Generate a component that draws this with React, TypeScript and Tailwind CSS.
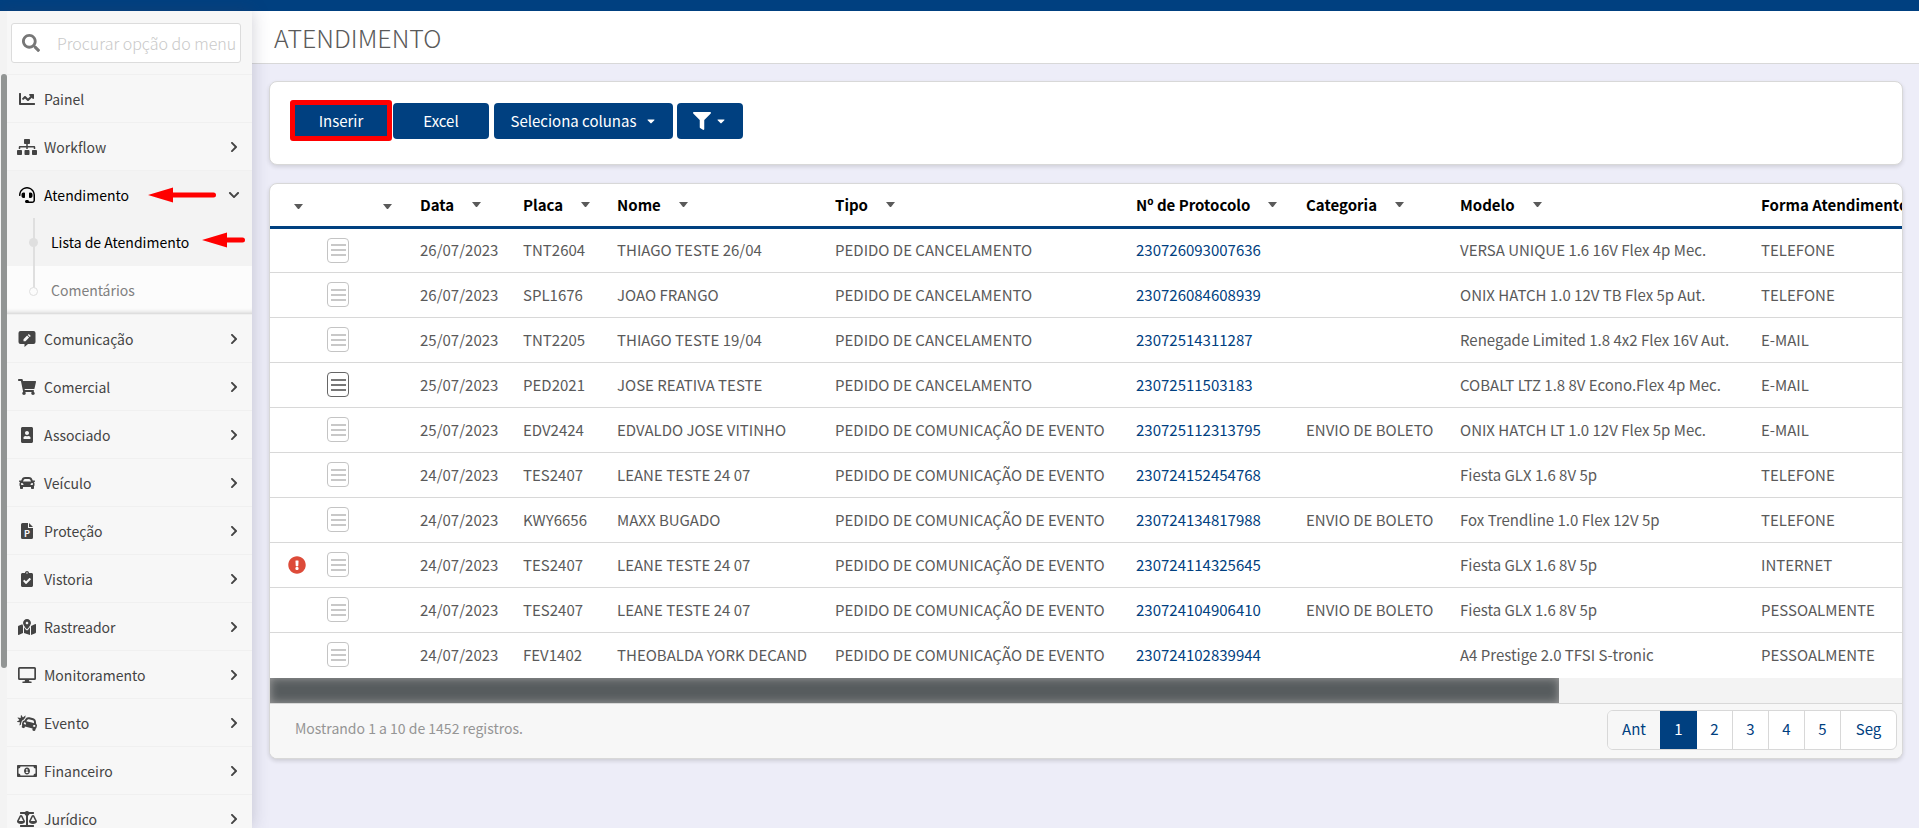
import { useState } from "react";
import type { ComponentType } from "react";
import {
  FaBalanceScale,
  FaCar,
  FaCarCrash,
  FaCaretDown,
  FaChartLine,
  FaChevronDown,
  FaChevronRight,
  FaClipboardCheck,
  FaExclamationCircle,
  FaFilter,
  FaHeadset,
  FaMapMarkedAlt,
  FaPortrait,
  FaRegMoneyBillAlt,
  FaSearch,
  FaShoppingCart,
  FaSitemap,
} from "react-icons/fa";

type IconType = ComponentType<{ className?: string }>;

// speech box with a pencil cut out of it
function CommentPenIcon({ className }: { className?: string }) {
  return (
    <svg viewBox="0 0 17 16" className={className} aria-hidden="true">
      <path
        fill="currentColor"
        fillRule="evenodd"
        d="M2 0h13a2 2 0 0 1 2 2v9a2 2 0 0 1-2 2H9.500L6 16v-3H2a2 2 0 0 1-2-2V2a2 2 0 0 1 2-2ZM5 8.200V10.200H7L10.600 6.600L8.600 4.600ZM9.300 3.900L11.300 5.900L12.300 4.900L10.300 2.900Z"
      />
    </svg>
  );
}

function FileBadgeIcon({ className }: { className?: string }) {
  return (
    <span className={`relative inline-flex items-center justify-center ${className ?? ""}`}>
      <svg viewBox="0 0 12 16" className="h-4 w-3" aria-hidden="true">
        <path
          fill="currentColor"
          d="M1.500 0H7v4.500a.5.500 0 0 0 .5.500H12v9.500a1.500 1.500 0 0 1-1.500 1.500h-9A1.500 1.500 0 0 1 0 14.500v-13A1.500 1.500 0 0 1 1.500 0ZM8 0L12 4H8Z"
        />
      </svg>
      <span className="absolute inset-x-0 bottom-0 text-center text-[9px] leading-[11px] font-bold text-[#f7f7f7]">
        P
      </span>
    </span>
  );
}

function MonitorIcon({ className }: { className?: string }) {
  return (
    <svg viewBox="0 0 18 16" className={className} aria-hidden="true">
      <path
        fill="currentColor"
        fillRule="evenodd"
        d="M1.500 0h15A1.500 1.500 0 0 1 18 1.500v10a1.500 1.500 0 0 1-1.500 1.500H11l.4 1.500h1.600a.7.700 0 0 1 0 1.500H5a.7.700 0 0 1 0-1.500h1.600L7 13H1.500A1.500 1.500 0 0 1 0 11.500v-10A1.500 1.500 0 0 1 1.500 0ZM1.700 1.700v9.600h14.600V1.700Z"
      />
    </svg>
  );
}

const MENU: { label: string; icon: IconType; leaf?: boolean }[] = [
  { label: "Painel", icon: FaChartLine, leaf: true },
  { label: "Workflow", icon: FaSitemap },
  { label: "Atendimento", icon: FaHeadset },
  { label: "Comunicação", icon: CommentPenIcon },
  { label: "Comercial", icon: FaShoppingCart },
  { label: "Associado", icon: FaPortrait },
  { label: "Veículo", icon: FaCar },
  { label: "Proteção", icon: FileBadgeIcon },
  { label: "Vistoria", icon: FaClipboardCheck },
  { label: "Rastreador", icon: FaMapMarkedAlt },
  { label: "Monitoramento", icon: MonitorIcon },
  { label: "Evento", icon: FaCarCrash },
  { label: "Financeiro", icon: FaRegMoneyBillAlt },
  { label: "Jurídico", icon: FaBalanceScale },
];

const CANCEL = "PEDIDO DE CANCELAMENTO";
const EVENTO = "PEDIDO DE COMUNICAÇÃO DE EVENTO";
const BOLETO = "ENVIO DE BOLETO";

type Row = {
  data: string;
  placa: string;
  nome: string;
  tipo: string;
  protocolo: string;
  categoria?: string;
  modelo: string;
  forma: string;
  alert?: boolean;
  active?: boolean;
};

const ROWS: Row[] = [
  { data: "26/07/2023", placa: "TNT2604", nome: "THIAGO TESTE 26/04", tipo: CANCEL, protocolo: "230726093007636", modelo: "VERSA UNIQUE 1.6 16V Flex 4p Mec.", forma: "TELEFONE" },
  { data: "26/07/2023", placa: "SPL1676", nome: "JOAO FRANGO", tipo: CANCEL, protocolo: "230726084608939", modelo: "ONIX HATCH 1.0 12V TB Flex 5p Aut.", forma: "TELEFONE" },
  { data: "25/07/2023", placa: "TNT2205", nome: "THIAGO TESTE 19/04", tipo: CANCEL, protocolo: "23072514311287", modelo: "Renegade Limited 1.8 4x2 Flex 16V Aut.", forma: "E-MAIL" },
  { data: "25/07/2023", placa: "PED2021", nome: "JOSE REATIVA TESTE", tipo: CANCEL, protocolo: "23072511503183", modelo: "COBALT LTZ 1.8 8V Econo.Flex 4p Mec.", forma: "E-MAIL", active: true },
  { data: "25/07/2023", placa: "EDV2424", nome: "EDVALDO JOSE VITINHO", tipo: EVENTO, protocolo: "230725112313795", categoria: BOLETO, modelo: "ONIX HATCH LT 1.0 12V Flex 5p Mec.", forma: "E-MAIL" },
  { data: "24/07/2023", placa: "TES2407", nome: "LEANE TESTE 24 07", tipo: EVENTO, protocolo: "230724152454768", modelo: "Fiesta GLX 1.6 8V 5p", forma: "TELEFONE" },
  { data: "24/07/2023", placa: "KWY6656", nome: "MAXX BUGADO", tipo: EVENTO, protocolo: "230724134817988", categoria: BOLETO, modelo: "Fox Trendline 1.0 Flex 12V 5p", forma: "TELEFONE" },
  { data: "24/07/2023", placa: "TES2407", nome: "LEANE TESTE 24 07", tipo: EVENTO, protocolo: "230724114325645", modelo: "Fiesta GLX 1.6 8V 5p", forma: "INTERNET", alert: true },
  { data: "24/07/2023", placa: "TES2407", nome: "LEANE TESTE 24 07", tipo: EVENTO, protocolo: "230724104906410", categoria: BOLETO, modelo: "Fiesta GLX 1.6 8V 5p", forma: "PESSOALMENTE" },
  { data: "24/07/2023", placa: "FEV1402", nome: "THEOBALDA YORK DECAND", tipo: EVENTO, protocolo: "230724102839944", modelo: "A4 Prestige 2.0 TFSI S-tronic", forma: "PESSOALMENTE" },
];

const HEADERS = ["Data", "Placa", "Nome", "Tipo", "Nº de Protocolo", "Categoria", "Modelo", "Forma Atendimento"];

function Caret() {
  return (
    <svg viewBox="0 0 9 5" className="inline-block h-[5px] w-[9px] shrink-0" aria-hidden="true">
      <path fill="currentColor" d="M0 0H9L5 5H4Z" />
    </svg>
  );
}

// red pointers drawn over the menu as a hint
function LongArrow() {
  return (
    <svg viewBox="0 0 68 16" className="h-4 w-[68px] shrink-0" aria-hidden="true">
      <path fill="#ff0000" d="M0 8L25 .5V5.500H65.500a2.500 2.500 0 0 1 0 5H25V15.500Z" />
    </svg>
  );
}

function ShortArrow() {
  return (
    <svg viewBox="0 0 43 16" className="h-4 w-[43px] shrink-0" aria-hidden="true">
      <path fill="#ff0000" d="M0 8L25 .5V5.500H40.500a2.500 2.500 0 0 1 0 5H25V15.500Z" />
    </svg>
  );
}

function SubMenu() {
  return (
    <ul className="relative shadow-[inset_0_-5px_5px_-4px_#c8c8c8]">
      <li className="flex h-12 items-center bg-[#f3f3f3] text-black">
        <a href="#lista" className="ml-11 whitespace-nowrap">
          Lista de Atendimento
        </a>
        <span className="ml-auto mr-[7px] flex pb-1">
          <ShortArrow />
        </span>
      </li>
      <li className="flex h-12 items-center text-[#808080]">
        <a href="#comentarios" className="ml-11">
          Comentários
        </a>
      </li>
      <li aria-hidden="true" className="absolute top-0 left-[26px] h-[70px] w-[2px] bg-[#dfdfdf]" />
      <li aria-hidden="true" className="absolute top-5 left-[22px] size-[9px] rounded-full bg-[#dfdfdf]" />
      <li
        aria-hidden="true"
        className="absolute top-[69px] left-[22px] size-[9px] rounded-full border border-[#dfdfdf] bg-[#fcfcfc]"
      />
    </ul>
  );
}

function Sidebar() {
  const [query, setQuery] = useState("");
  return (
    <aside className="relative z-10 flex w-[252px] shrink-0 overflow-hidden bg-[#f7f7f7] shadow-[0_0_16px_rgba(60,60,90,0.25)]">
      <div className="flex w-[7px] shrink-0 justify-end bg-[#f3f3f3] pt-[63px]">
        <div className="h-[594px] w-[6px] rounded-[3px] bg-[#929594]" />
      </div>
      <div className="min-w-0 flex-1">
        <div className="px-1 pt-3 pb-[11px]">
          <label className="flex h-10 w-[230px] items-center overflow-hidden rounded-[3px] border border-[#dcdcdc] bg-white">
            <span className="sr-only">Procurar opção do menu</span>
            <FaSearch className="ml-[10px] size-[18px] shrink-0 text-[#777]" />
            <input
              type="text"
              value={query}
              onChange={(e) => setQuery(e.target.value)}
              placeholder="Procurar opção do menu"
              className="ml-[17px] w-full min-w-0 bg-transparent text-base font-light text-[#444] outline-none placeholder:text-[#c9c9c9]"
            />
          </label>
        </div>
        <nav>
          <ul className="text-sm text-[#444]">
            {MENU.map(({ label, icon: Icon, leaf }) => {
              const open = label === "Atendimento";
              return (
                <li key={label} className={open ? "bg-[#fcfcfc]" : ""}>
                  <a
                    href={`#${label.toLowerCase()}`}
                    className={
                      open
                        ? "flex h-12 items-center border-t border-[#f0f0f0] bg-[#f3f3f3] text-black"
                        : "flex h-12 items-center border-t border-[#f0f0f0]"
                    }
                  >
                    <Icon className="ml-[10px] h-4 w-5 shrink-0" />
                    <span className="ml-[7px]">{label}</span>
                    {open && (
                      <span className="mr-3 ml-auto flex">
                        <LongArrow />
                      </span>
                    )}
                    {!leaf &&
                      (open ? (
                        <FaChevronDown className="mr-3 size-3 text-[#444]" />
                      ) : (
                        <FaChevronRight className="mr-3 ml-auto size-3" />
                      ))}
                  </a>
                  {open && <SubMenu />}
                </li>
              );
            })}
          </ul>
        </nav>
      </div>
    </aside>
  );
}

function Toolbar() {
  return (
    <section className="rounded-lg border border-[#d8d8d8] bg-white px-5 pt-[18px] pb-[23px] shadow-[0_2px_4px_rgba(0,0,0,0.12)]">
      <div className="flex items-center text-[15px] leading-5 text-white">
        <button type="button" className="h-[41px] w-[102px] rounded-[3px] border-[5px] border-[#ff0000] bg-[#004080]">
          Inserir
        </button>
        <button type="button" className="ml-px h-9 w-24 rounded bg-[#004080]">
          Excel
        </button>
        <button type="button" className="ml-[5px] flex h-9 w-[179px] items-center justify-center gap-2 rounded bg-[#004080]">
          Seleciona colunas
          <FaCaretDown className="size-3" />
        </button>
        <button
          type="button"
          aria-label="Filtro"
          className="ml-1 flex h-9 w-[66px] items-center justify-center gap-1 rounded bg-[#004080]"
        >
          <FaFilter className="size-[18px]" />
          <FaCaretDown className="size-3" />
        </button>
      </div>
    </section>
  );
}

function RowButton({ active }: { active?: boolean }) {
  return (
    <button
      type="button"
      aria-label="Detalhes"
      className={
        active
          ? "flex h-[25px] w-[22px] flex-col items-center justify-center gap-[3px] rounded border border-[#666] text-[#777]"
          : "flex h-[25px] w-[22px] flex-col items-center justify-center gap-[3px] rounded border border-[#c4c4c4] text-[#c8c8c8]"
      }
    >
      <span className="h-[2px] w-[15px] bg-current" />
      <span className="h-[2px] w-[15px] bg-current" />
      <span className="h-[2px] w-[15px] bg-current" />
    </button>
  );
}

function Records() {
  return (
    <section className="mt-[18px] overflow-hidden rounded-lg border border-[#d8d8d8] bg-white shadow-[0_2px_4px_rgba(0,0,0,0.14)]">
      <div className="overflow-hidden">
        <table className="w-[2064px] table-fixed border-collapse text-left text-[15px] leading-5 whitespace-nowrap text-[#5a5a5a]">
          <colgroup>
            <col className="w-[47px]" />
            <col className="w-[93px]" />
            <col className="w-[103px]" />
            <col className="w-[94px]" />
            <col className="w-[218px]" />
            <col className="w-[301px]" />
            <col className="w-[170px]" />
            <col className="w-[154px]" />
            <col className="w-[301px]" />
            <col />
          </colgroup>
          <thead>
            <tr className="h-[43px] border-b-[3px] border-[#004080]">
              <th className="pl-6">
                <Caret />
              </th>
              <th className="pr-[18px] text-right">
                <Caret />
              </th>
              {HEADERS.map((h) => (
                <th key={h} className="pl-[10px] font-bold text-black">
                  <span className="flex items-center gap-[18px]">
                    {h}
                    <span className="flex text-[#5a5a5a]">
                      <Caret />
                    </span>
                  </span>
                </th>
              ))}
            </tr>
          </thead>
          <tbody>
            {ROWS.map((r) => (
              <tr key={r.protocolo} className="h-[45px] border-b border-[#d8d8d8] last:border-transparent">
                <td className="pl-[18px]">
                  {r.alert && <FaExclamationCircle className="size-[18px] text-[#dd4b39]" />}
                </td>
                <td className="pl-[10px]">
                  <RowButton active={r.active} />
                </td>
                <td className="pl-[10px]">{r.data}</td>
                <td className="pl-[10px]">{r.placa}</td>
                <td className="pl-[10px]">{r.nome}</td>
                <td className="pl-[10px]">{r.tipo}</td>
                <td className="pl-[10px]">
                  <a href={`#${r.protocolo}`} className="text-[#004080]">
                    {r.protocolo}
                  </a>
                </td>
                <td className="pl-[10px]">{r.categoria}</td>
                <td className="pl-[10px]">{r.modelo}</td>
                <td className="pl-[10px]">{r.forma}</td>
              </tr>
            ))}
          </tbody>
        </table>
      </div>
      <div className="h-[25px] bg-[#f3f3f3]">
        <div className="h-full w-[79%] bg-[#575c5e] shadow-[inset_0_0_10px_#a0a0a0]" />
      </div>
      <footer className="flex h-[55px] items-start justify-between border-t border-[#d8d8d8] bg-[#f7f7f7] pt-[6px] pr-[5px] pl-[25px]">
        <p className="pt-2 text-sm leading-5 text-[#959595]">Mostrando 1 a 10 de 1452 registros.</p>
        <nav aria-label="Paginação" className="flex h-10 overflow-hidden rounded-md border border-[#d8d8d8] bg-white text-[15px] text-[#004080]">
          <a href="#ant" className="flex w-[52px] items-center justify-center bg-[#f7f7f7]">
            Ant
          </a>
          <a href="#1" aria-current="page" className="flex w-[37px] items-center justify-center bg-[#004080] text-white">
            1
          </a>
          {[2, 3, 4, 5].map((n) => (
            <a key={n} href={`#${n}`} className="flex w-9 items-center justify-center border-r border-[#d8d8d8]">
              {n}
            </a>
          ))}
          <a href="#seg" className="flex w-[55px] items-center justify-center">
            Seg
          </a>
        </nav>
      </footer>
    </section>
  );
}

export default function App() {
  return (
    <div className="flex h-screen flex-col overflow-hidden bg-[#ededf8] font-['Noto_Sans_CJK_JP',sans-serif]">
      <div className="h-[11px] shrink-0 bg-[#004080]" />
      <div className="flex min-h-0 flex-1">
        <Sidebar />
        <main className="min-w-0 flex-1">
          <header className="flex h-[53px] items-center border-b border-[#d8d8d8] bg-white pl-[22px]">
            <h1 className="text-[25px] leading-8 font-light text-[#5a5a5a]">ATENDIMENTO</h1>
          </header>
          <div className="pt-[17px] pr-4 pl-[17px]">
            <Toolbar />
            <Records />
          </div>
        </main>
      </div>
    </div>
  );
}
